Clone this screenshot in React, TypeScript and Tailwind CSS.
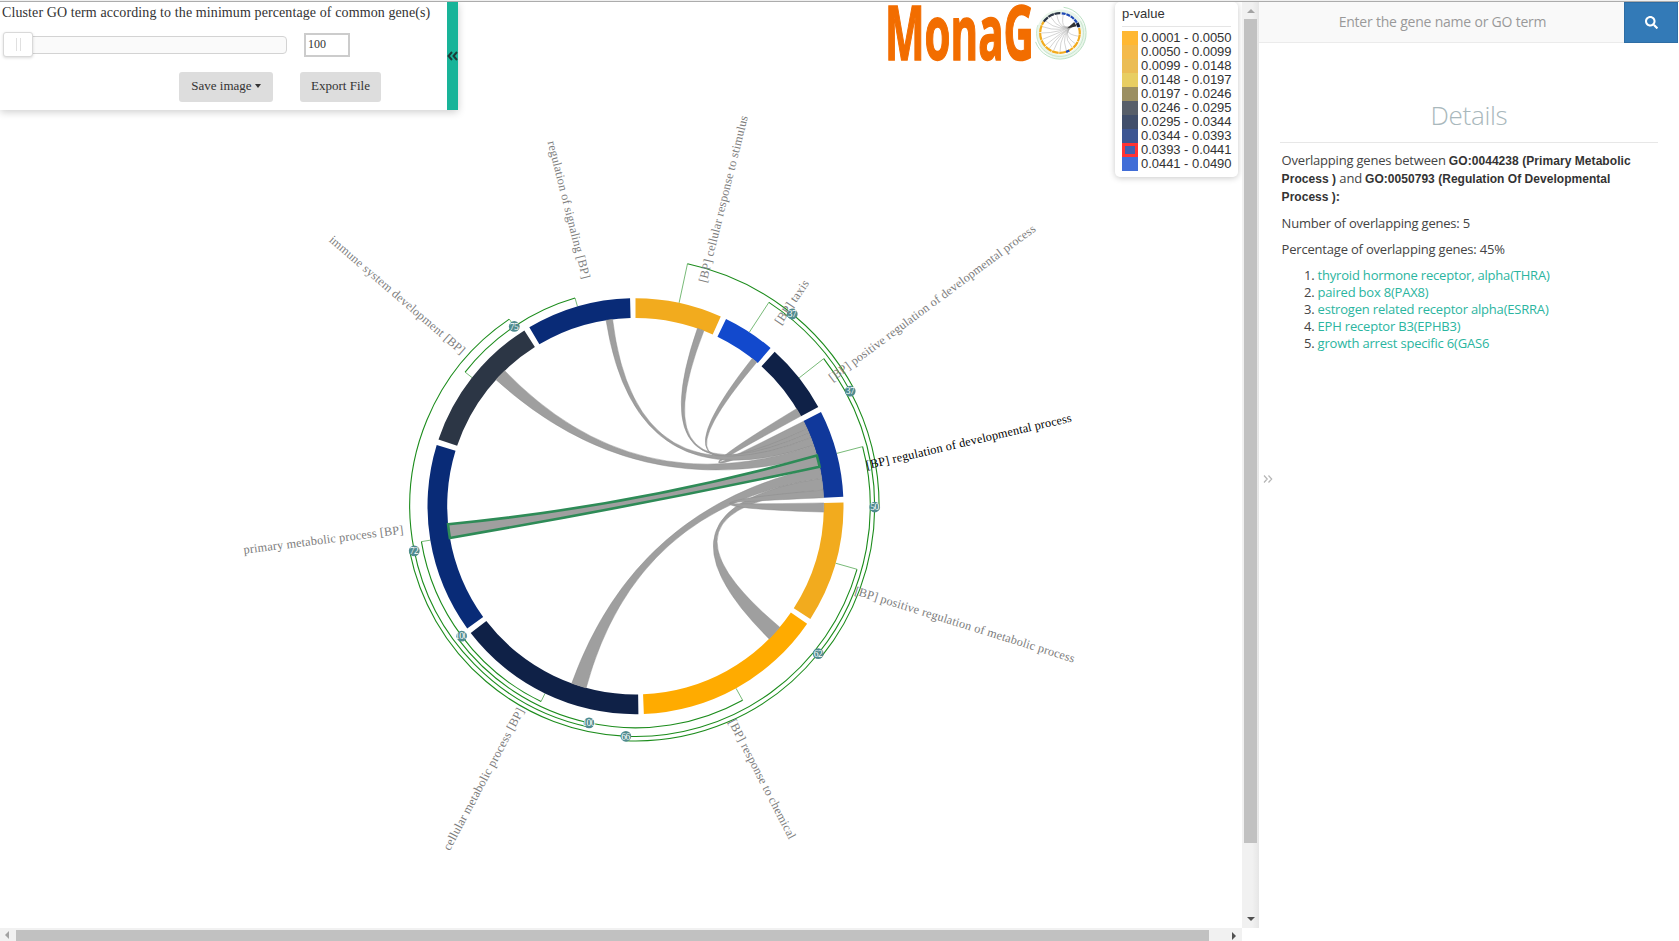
import React from "react";
import { FaSearch } from "react-icons/fa";

const CX = 635.5;
const CY = 506.2;
const OUTER = 208;
const INNER = 188.3;

const pt = (deg: number, r: number): [number, number] => {
  const a = (deg * Math.PI) / 180;
  return [CX + r * Math.sin(a), CY - r * Math.cos(a)];
};
const xy = (deg: number, r: number) => pt(deg, r).map((v) => v.toFixed(2)).join(" ");

const segments = [
  { from: 0, to: 24.2, fill: "#f2ab1e" },
  { from: 25.8, to: 40.5, fill: "#1249cd" },
  { from: 42, to: 61.5, fill: "#0f2147" },
  { from: 63.1, to: 87.4, fill: "#10389b" },
  { from: 89, to: 122.8, fill: "#f2ab1e" },
  { from: 124.4, to: 177.7, fill: "#ffab00" },
  { from: 179.2, to: 232.4, fill: "#0f2147" },
  { from: 234, to: 287.1, fill: "#092b77" },
  { from: 288.7, to: 327.7, fill: "#2c3645" },
  { from: 329.3, to: 358.5, fill: "#092b77" },
];

const segmentPath = (a: number, b: number) =>
  `M${xy(a, OUTER)}A${OUTER} ${OUTER} 0 0 1 ${xy(b, OUTER)}L${xy(b, INNER)}A${INNER} ${INNER} 0 0 0 ${xy(a, INNER)}Z`;

const chords: [number, number, number, number][] = [
  [58.8, 61.4, 63.2, 65.8],
  [38.3, 40.1, 65.8, 67.2],
  [19.2, 21.3, 67.2, 68.7],
  [351, 353, 68.7, 71.1],
  [312.2, 316, 71.1, 74.4],
  [195.2, 199.8, 77.9, 81.5],
  [130, 134.8, 81.5, 85.1],
  [89, 91.8, 85.1, 87.4],
];

const chordPath = ([a, b, c, d]: [number, number, number, number]) =>
  `M${xy(a, INNER)}A${INNER} ${INNER} 0 0 1 ${xy(b, INNER)}Q${CX} ${CY} ${xy(c, INNER)}A${INNER} ${INNER} 0 0 1 ${xy(d, INNER)}Q${CX} ${CY} ${xy(a, INNER)}Z`;

const brackets = [
  { a: 205.8, ra: OUTER, b: 260.6, rb: OUTER, r: 217, at: 233.2, label: "100" },
  { a: 151.1, ra: OUTER, b: 233.2, rb: 217, r: 221.6, at: 192.1, label: "100" },
  { a: 308.2, ra: OUTER, b: 343.8, rb: OUTER, r: 216.8, at: 326, label: "75" },
  { a: 192.1, ra: 221.6, b: 326, rb: 216.8, r: 225.7, at: 258.6, label: "72" },
  { a: 105.9, ra: OUTER, b: 258.6, rb: 225.7, r: 230.3, at: 182.4, label: "66" },
  { a: 75.3, ra: OUTER, b: 182.4, rb: 230.3, r: 234.8, at: 128.9, label: "62" },
  { a: 51.9, ra: OUTER, b: 128.9, rb: 234.8, r: 239.2, at: 90.2, label: "50" },
  { a: 33.2, ra: OUTER, b: 90.2, rb: 239.2, r: 243.6, at: 61.8, label: "37" },
  { a: 12.1, ra: OUTER, b: 61.8, rb: 243.6, r: 248, at: 39.2, label: "37" },
];

const labels = [
  { x: 706.4, y: 283.3, rot: -76, text: "[BP] cellular response to stimulus" },
  { x: 780.8, y: 325.5, rot: -55.8, text: "[BP] taxis" },
  { x: 832.5, y: 381.9, rot: -36.6, text: "[BP] positive regulation of developmental process" },
  { x: 867, y: 469.2, rot: -13.1, text: "[BP] regulation of developmental process", active: true },
  { x: 854, y: 594.3, rot: 17.3, text: "[BP] positive regulation of metabolic process" },
  { x: 728.3, y: 721.7, rot: 62.8, text: "[BP] response to chemical" },
  { x: 524.5, y: 710.5, rot: -62, text: "cellular metabolic process [BP]", end: true },
  { x: 404, y: 533.6, rot: -7.2, text: "primary metabolic process [BP]", end: true },
  { x: 461, y: 355, rot: 40.7, text: "immune system development [BP]", end: true },
  { x: 582.5, y: 279.5, rot: 75.7, text: "regulation of signaling [BP]", end: true },
];

const legend = [
  { color: "#ffb833", range: "0.0001 - 0.0050" },
  { color: "#f4ba4b", range: "0.0050 - 0.0099" },
  { color: "#ebbd55", range: "0.0099 - 0.0148" },
  { color: "#e8ce62", range: "0.0148 - 0.0197" },
  { color: "#9b8f62", range: "0.0197 - 0.0246" },
  { color: "#575e69", range: "0.0246 - 0.0295" },
  { color: "#404e6b", range: "0.0295 - 0.0344" },
  { color: "#3c5592", range: "0.0344 - 0.0393" },
  { color: "#4060b0", range: "0.0393 - 0.0441", selected: true },
  { color: "#416dd7", range: "0.0441 - 0.0490" },
];

const genes = [
  "thyroid hormone receptor, alpha(THRA)",
  "paired box 8(PAX8)",
  "estrogen related receptor alpha(ESRRA)",
  "EPH receptor B3(EPHB3)",
  "growth arrest specific 6(GAS6",
];

function ChordDiagram() {
  return (
    <svg width="1242" height="926" viewBox="0 2 1242 926" className="block font-['Liberation_Serif',serif]">
      {brackets.map((k, i) => (
        <g key={i} fill="none" stroke="#1c8c1c">
          <path strokeWidth="0.6" d={`M${xy(k.a, k.ra)}L${xy(k.a, k.r)}M${xy(k.b, k.rb)}L${xy(k.b, k.r)}`} />
          <path strokeWidth="1.1" d={`M${xy(k.a, k.r)}A${k.r} ${k.r} 0 0 1 ${xy(k.b, k.r)}`} />
        </g>
      ))}
      {brackets.map((k, i) => {
        const [x, y] = pt(k.at, k.r);
        return (
          <g key={i}>
            <circle cx={x} cy={y} r="5.4" fill="#508b8f" />
            <text x={x - 0.3} y={y + 3.3} textAnchor="middle" fontSize="9.5" letterSpacing="-0.5" fill="#ffffff">
              {k.label}
            </text>
          </g>
        );
      })}
      {segments.map((s, i) => (
        <path key={i} d={segmentPath(s.from, s.to)} fill={s.fill} />
      ))}
      {chords.map((c, i) => (
        <path key={i} d={chordPath(c)} fill="#9f9f9f" stroke="#8a8a8a" strokeWidth="0.45" />
      ))}
      <path d={chordPath([260.3, 264.5, 74.4, 77.9])} fill="#9f9f9f" stroke="#2e8b57" strokeWidth="2.6" />
      {labels.map((l) => (
        <text
          key={l.text}
          transform={`translate(${l.x} ${l.y}) rotate(${l.rot})`}
          textAnchor={l.end ? "end" : "start"}
          fontSize="12.25"
          letterSpacing="0.17"
          fill={l.active ? "#000000" : "#7d7d7d"}
        >
          {l.text}
        </text>
      ))}
    </svg>
  );
}

function Logo() {
  const spokes = [100, 125, 140, 160, 180, 200, 215, 230, 250, 270, 290, 310, 330, 350, 10];
  const p = (d: number, r: number) => {
    const a = (d * Math.PI) / 180;
    return `${(1060 + r * Math.sin(a)).toFixed(1)} ${(33 - r * Math.cos(a)).toFixed(1)}`;
  };
  const arc = (a: number, b: number, r: number) => `M${p(a, r)}A${r} ${r} 0 ${b - a > 180 ? 1 : 0} 1 ${p(b, r)}`;
  return (
    <svg width="206" height="62" viewBox="886 2 206 62">
      <text
        x="885"
        y="59.8"
        fontSize="75"
        fontWeight="700"
        textLength="149"
        lengthAdjust="spacingAndGlyphs"
        fill="#f26d00"
        stroke="#f26d00"
        strokeWidth="1.6"
        className="font-['Open_Sans',sans-serif]"
      >
        MonaG
      </text>
      <g fill="none">
        <circle cx="1061" cy="34" r="22.5" stroke="#e9f5ea" strokeWidth="4" />
        <path d={arc(8, 250, 26)} stroke="#a9d8b4" strokeWidth="0.8" />
        <path d={arc(60, 290, 23.5)} stroke="#b9dfc1" strokeWidth="0.7" />
        <circle cx="1060" cy="33" r="20" fill="#ffffff" />
        {spokes.map((d) => (
          <path key={d} d={`M${p(d, 18.5)}Q1060 33 ${p(60, 17)}`} stroke="#a8a8a8" strokeWidth="0.5" />
        ))}
        <path d={`M${p(52, 18)}L${p(68, 18)}L1067 28.5Z`} fill="#333333" />
        <path d={arc(95, 305, 19.8)} stroke="#f2ab1e" strokeWidth="2.2" strokeDasharray="7 0.6" />
        <path d={arc(305, 362, 19.8)} stroke="#2c3645" strokeWidth="2.2" strokeDasharray="6 0.6" />
        <path d={arc(5, 75, 19.8)} stroke="#1f49b5" strokeWidth="2.2" strokeDasharray="4 0.8" />
        <path d={arc(60, 72, 19.8)} stroke="#101d3a" strokeWidth="3" />
        <path d={arc(152, 162, 19.8)} stroke="#1f49b5" strokeWidth="2.4" />
        <path d={arc(75, 94, 19.8)} stroke="#f2ab1e" strokeWidth="2.2" />
      </g>
    </svg>
  );
}

function Controls() {
  return (
    <div className="absolute left-0 top-0 flex h-[108px] w-[458px] bg-white font-['Liberation_Serif',serif] text-[#333] shadow-[0_2px_8px_rgba(0,0,0,0.2)]">
      <div className="flex w-[447px] flex-col">
        <div className="h-[30px] whitespace-nowrap pl-[2px] pt-[1px] text-[14px] leading-[20px] tracking-[0.1px]">
          Cluster GO term according to the minimum percentage of common gene(s)
        </div>
        <div className="flex h-[25px] items-center pl-[3px]">
          <div className="z-10 flex h-[25px] w-[30px] items-center justify-center gap-[3px] rounded-[3px] border border-[#d9d9d9] bg-white shadow-[0_1px_3px_rgba(0,0,0,0.15)]">
            <span className="h-[13px] w-px bg-[#e0e0e0]" />
            <span className="h-[13px] w-px bg-[#e0e0e0]" />
          </div>
          <div className="-ml-1 h-[18px] w-[258px] rounded-[4px] border border-[#d3d3d3] bg-[#fafafa]" />
          <div className="ml-[17px] h-[24px] w-[46px] border-2 border-[#ccc] bg-white pl-[2px] text-[12px] leading-[19px]">100</div>
        </div>
        <div className="flex gap-[27px] pl-[179px] pt-[15px] text-[13px]">
          <div className="flex h-[30px] w-[94px] items-center justify-center gap-[3px] rounded-[3px] bg-[#ddd] pb-[2px]">
            Save image
            <span className="h-0 w-0 border-x-[3.5px] border-t-[4px] border-x-transparent border-t-[#333]" />
          </div>
          <div className="flex h-[30px] w-[81px] items-center justify-center rounded-[3px] bg-[#ddd] pb-[2px]">Export File</div>
        </div>
      </div>
      <div className="flex w-[11px] items-center justify-center bg-[#18b499]">
        <svg width="11" height="10" viewBox="0 0 11 10" fill="none" stroke="#1c3c38" strokeWidth="2">
          <path d="M5 1L1.5 5L5 9M10 1L6.5 5L10 9" />
        </svg>
      </div>
    </div>
  );
}

function Legend() {
  return (
    <div className="absolute left-[1115px] top-0 h-[175px] w-[123px] rounded-[5px] bg-white px-[7px] font-['Liberation_Sans',sans-serif] text-[13px] text-[#333] shadow-[0_1px_6px_rgba(0,0,0,0.22)]">
      <div className="h-[25px] border-b border-[#e5e5e5] leading-[23px]">p-value</div>
      <div className="mt-[4px] flex flex-col">
        {legend.map((l) => (
          <div key={l.range} className="flex h-[14px] items-center gap-[3px] whitespace-nowrap">
            <span
              className={l.selected ? "h-[14px] w-[16px] shrink-0 border-[3px] border-[#ff3333]" : "h-[14px] w-[16px] shrink-0"}
              style={{ backgroundColor: l.color }}
            />
            <span className="leading-[14px] tracking-[-0.04px]">{l.range}</span>
          </div>
        ))}
      </div>
    </div>
  );
}

function Sidebar() {
  return (
    <aside className="relative flex w-[420px] flex-col font-['Open_Sans',sans-serif] text-[#444]">
      <div className="flex h-[41px] pr-px">
        <div className="flex w-[365px] items-center justify-center border-b border-[#ebebeb] bg-[#f9f9f9] pb-[2px] pl-[2px] text-[14px] tracking-[-0.21px] text-[#999]">
          Enter the gene name or GO term
        </div>
        <div className="flex w-[54px] items-center justify-center border border-[#2e6da4] bg-[#337ab7] text-[13px] text-white">
          <FaSearch />
        </div>
      </div>
      <div className="mx-[21px] flex h-[100px] items-end justify-center border-b border-[#e7e7e7] pb-[9px] text-[26px] font-light leading-[36px] tracking-[-0.3px] text-[#a9b8bc]">
        Details
      </div>
      <div className="flex flex-col pl-[22.6px] pt-[8px] text-[13px] tracking-[-0.2px]">
        <p className="w-[370px] leading-[18px]">
          Overlapping genes between{" "}
          <b className="font-['Liberation_Sans',sans-serif] text-[12px] leading-none tracking-[0.06px] text-[#333]">
            GO:0044238 (Primary Metabolic Process )
          </b>{" "}
          and{" "}
          <b className="font-['Liberation_Sans',sans-serif] text-[12px] leading-none tracking-[0.03px] text-[#333]">
            GO:0050793 (Regulation Of Developmental Process )
          </b>
          <b>:</b>
        </p>
        <p className="mt-[10px] leading-[17px]">Number of overlapping genes: 5</p>
        <p className="mt-[9px] leading-[17px]">Percentage of overlapping genes: 45%</p>
        <ol className="mt-[9px] list-decimal pl-[36px] leading-[17px]">
          {genes.map((g) => (
            <li key={g}>
              <span className="text-[#2bb5a0]">{g}</span>
            </li>
          ))}
        </ol>
      </div>
      <svg className="absolute left-[4px] top-[473px]" width="10" height="8" viewBox="0 0 10 8" fill="none" stroke="#b5b5b5" strokeWidth="1.2">
        <path d="M1 0.5L4.2 4L1 7.5M5.5 0.5L8.7 4L5.5 7.5" />
      </svg>
    </aside>
  );
}

export default function App() {
  return (
    <div className="flex h-[941px] w-[1679px] flex-col overflow-hidden bg-white">
      <div className="h-[2px] shrink-0 border-b border-[#acacac] bg-[#f0f0f0]" />
      <div className="flex min-h-0 flex-1">
        <div className="flex w-[1259px] flex-col">
          <div className="flex h-[926px]">
            <main className="relative w-[1242px] overflow-hidden">
              <ChordDiagram />
              <Controls />
              <div className="absolute left-[886px] top-0">
                <Logo />
              </div>
              <Legend />
            </main>
            <div className="flex w-[17px] flex-col items-center bg-gradient-to-r from-[#f1f1f1] from-60% to-[#e6e6e6]">
              <div className="flex h-[17px] items-center">
                <span className="border-x-[4px] border-b-[4px] border-x-transparent border-b-[#a3a3a3]" />
              </div>
              <div className="h-[824px] w-[13px] bg-[#c1c1c1]" />
              <div className="mt-[74px] border-x-[4px] border-t-[4px] border-x-transparent border-t-[#505050]" />
            </div>
          </div>
          <div className="flex h-[13px] w-[1242px] items-center bg-[#f1f1f1]">
            <span className="ml-[5px] border-y-[4px] border-r-[4px] border-y-transparent border-r-[#a3a3a3]" />
            <span className="ml-[7px] mt-[2px] h-[11px] w-[1193px] bg-[#c1c1c1]" />
            <span className="ml-[23px] mt-[3px] border-y-[4px] border-l-[4px] border-y-transparent border-l-[#505050]" />
          </div>
        </div>
        <Sidebar />
      </div>
    </div>
  );
}
